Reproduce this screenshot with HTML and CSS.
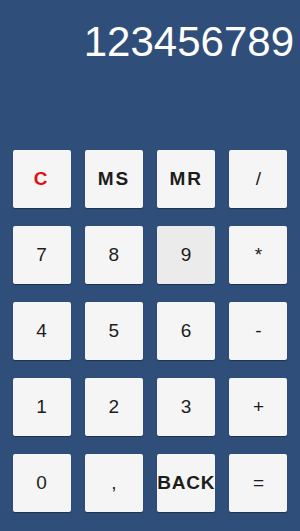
FILE: index.html
```html
<!DOCTYPE html>
<html lang="en">
<head>
  <meta charset="UTF-8" />
  <title>Calculator</title>
  <link rel="stylesheet" href="styles.css">
</head>
<body>
  <div id="calc">
    <div id="display">123456789</div>
    <div id="teclas">
      <button class="tecla func limpar">C</button>
      <button class="tecla func">MS</button>
      <button class="tecla func">MR</button>
      <button class="tecla">/</button>
      <button class="tecla">7</button>
      <button class="tecla">8</button>
      <button class="tecla ativa">9</button>
      <button class="tecla">*</button>
      <button class="tecla">4</button>
      <button class="tecla">5</button>
      <button class="tecla">6</button>
      <button class="tecla">-</button>
      <button class="tecla">1</button>
      <button class="tecla">2</button>
      <button class="tecla">3</button>
      <button class="tecla">+</button>
      <button class="tecla">0</button>
      <button class="tecla">,</button>
      <button class="tecla func back">BACK</button>
      <button class="tecla">=</button>
    </div>
  </div>
</body>
</html>
```

FILE: styles.css
```css
body {
  margin: 0;
  background-color: #304e7a;
  font-family: "Liberation Sans", Arial, sans-serif;
  height: 100vh;
  overflow: hidden;
}

#calc {
  display: flex;
  flex-direction: column;
}

#display {
  height: 150px;
  box-sizing: border-box;
  padding: 21px 6px 0 0;
  text-align: right;
  color: #fff;
  font-size: 42px;
  line-height: 42px;
}

#teclas {
  display: grid;
  grid-template-columns: repeat(4, 58px);
  grid-auto-rows: 58px;
  justify-content: space-between;
  row-gap: 18px;
  padding: 0 12.5px;
}

.tecla {
  border: none;
  border-radius: 2px;
  background-color: #f5f5f5;
  box-shadow: 0 1px 1px rgba(0, 0, 0, 0.35);
  color: #1c1c1c;
  font-family: "Liberation Sans", Arial, sans-serif;
  font-size: 19px;
  padding: 0;
  cursor: pointer;
}

.tecla.ativa {
  background-color: #ebebeb;
}

.func {
  font-weight: bold;
  font-size: 19px;
  letter-spacing: 1.8px;
}

.limpar {
  color: #e01010;
}

.back {
  letter-spacing: 0.8px;
  white-space: nowrap;
  overflow: visible;
}
```
